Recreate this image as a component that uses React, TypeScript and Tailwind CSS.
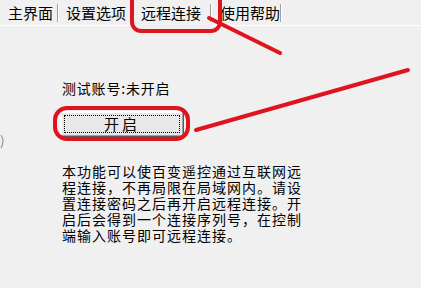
import React from "react";

const font = { fontFamily: '"Noto Sans CJK SC", "Liberation Sans", sans-serif' };

const Separator = () => (
  <div className="flex h-[18px] self-center">
    <div className="w-px h-full bg-[#a0a0a0]" />
    <div className="w-px h-full bg-white" />
  </div>
);

const App = () => {
  return (
    <div
      className="relative w-[421px] h-[288px] overflow-hidden bg-[#f0f0f0] text-black"
      style={font}
    >
      {/* tab bar */}
      <div className="flex items-stretch h-[26px] border-b border-white">
        <div className="flex items-center pl-[8px] w-[57px] text-[15px] leading-[16px]">
          主界面
        </div>
        <Separator />
        <div className="flex items-center pl-[7px] w-[71px] text-[15px] leading-[16px]">
          设置选项
        </div>
        <Separator />
        <div className="flex items-center pl-[9px] w-[78px] -mb-px border-b border-[#f0f0f0] text-[15px] leading-[16px]">
          远程连接
        </div>
        <Separator />
        <div className="flex items-center pl-[8px] w-[68px] text-[15px] leading-[16px]">
          使用帮助
        </div>
        <Separator />
      </div>

      {/* body */}
      <div className="flex flex-col items-start pl-[62px]">
        <div className="mt-[54px] text-[14px] leading-[16px] tracking-[0.8px]">
          测试账号:未开启
        </div>
        <button className="mt-[15px] -ml-[2px] w-[124px] h-[26px] p-0 bg-[#e8e8e8] border border-t-white border-l-white border-r-[#5a5a5a] border-b-[#5a5a5a] shadow-[inset_-1px_-1px_0_#a0a0a0,inset_1px_1px_0_#fcfcfc]">
          <div className="mx-[3px] h-[18px] border border-dotted border-black flex items-center justify-center text-[15px] leading-[16px] tracking-[3px]">
            开启
          </div>
        </button>
        <div className="mt-[26px] text-[14px] leading-[16px] tracking-[1px]">
          本功能可以使百变遥控通过互联网远
          <br />
          程连接，不再局限在局域网内。请设
          <br />
          置连接密码之后再开启远程连接。开
          <br />
          启后会得到一个连接序列号，在控制
          <br />
          端输入账号即可远程连接。
        </div>
      </div>

      {/* annotations drawn over the window */}
      <svg
        className="absolute inset-0 pointer-events-none"
        width="421"
        height="288"
        viewBox="0 0 421 288"
      >
        <path d="M1 135 Q5 141 1 148" stroke="#9a9a9a" strokeWidth="1.2" fill="none" />
        <g stroke="#e0141e" strokeWidth="4" fill="none" strokeLinecap="round">
          <rect x="132" y="-8" width="88" height="39" rx="9" />
          <rect x="55" y="108" width="133" height="31" rx="12" />
          <line x1="209" y1="18" x2="280" y2="53" />
          <line x1="196" y1="130" x2="408" y2="70" />
        </g>
      </svg>
    </div>
  );
};

export default App;
